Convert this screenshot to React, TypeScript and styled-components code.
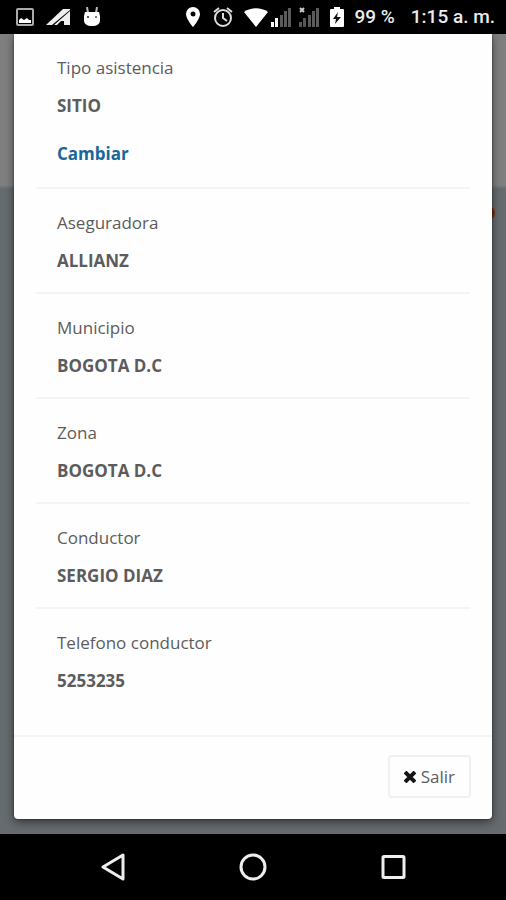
import React from "react";
import styled, { createGlobalStyle } from "styled-components";

const GlobalStyle = createGlobalStyle`
  *, *::before, *::after { box-sizing: border-box; }
  body { margin: 0; background: #000; font-family: "Open Sans", "Noto Sans", sans-serif; }
`;

const Screen = styled.div`
  display: flex;
  flex-direction: column;
  min-height: 100vh;
`;

const StatusBar = styled.header`
  display: flex;
  align-items: center;
  justify-content: space-between;
  height: 34px;
  padding: 0 11px 0 16px;
  background: #000;
  color: #ececec;
  font: 500 19px/34px Roboto, sans-serif;
`;

const StatusGroup = styled.div<{ $gap: number }>`
  display: flex;
  align-items: center;
  gap: ${(p) => p.$gap}px;
  white-space: nowrap;
  svg { display: block; flex: none; }
`;

const Stage = styled.main`
  position: relative;
  flex: 1;
  padding: 0 14px 15px;
  background: #656b6e;
`;

const DimmedHeader = styled.div`
  position: absolute;
  inset: 0 0 auto;
  height: 154px;
  background: #7f7f7f;
  border-bottom: 2px solid #717577;
`;

const DimmedBadge = styled.span`
  position: absolute;
  top: 172px;
  right: 11px;
  width: 14px;
  height: 14px;
  border-radius: 7px;
  background: #802808;
`;

const Dialog = styled.section`
  position: relative;
  background: #fefefe;
  border-radius: 0 0 4px 4px;
  box-shadow: 0 3px 10px rgba(0, 0, 0, 0.5), 0 0 2px rgba(0, 0, 0, 0.6);
`;

const Details = styled.dl`
  margin: 0;
  padding: 0 22px 23px;
`;

const Detail = styled.div`
  padding: 22px 21px 19px;
  border-bottom: 2px solid #f4f4f4;
  font-size: 17px;
  line-height: 24px;
  &:last-child { border-bottom: 0; }
`;

const Label = styled.dt`
  color: #5c5c5c;
`;

const Value = styled.dd`
  margin: 14px 0 0;
  color: #5c5c5c;
  font-weight: 700;
`;

const ChangeLink = styled.a`
  display: inline-block;
  color: #1b6699;
  text-decoration: none;
`;

const Action = styled.dd`
  margin: 24px 0 2px;
  font-weight: 700;
`;

const Footer = styled.footer`
  display: flex;
  justify-content: flex-end;
  padding: 18px 21px 21px;
  border-top: 2px solid #f4f4f4;
`;

const ExitButton = styled.button`
  display: flex;
  align-items: center;
  gap: 5px;
  height: 43px;
  padding: 0 14px;
  border: 2px solid #f0f0f0;
  border-radius: 4px;
  background: #fefefe;
  color: #5c5c5c;
  font: 17px/24px "Open Sans", "Noto Sans", sans-serif;
  svg { display: block; }
`;

const NavBar = styled.nav`
  display: flex;
  align-items: center;
  justify-content: center;
  gap: 100px;
  height: 66px;
  background: #000;
`;

const NavButton = styled.button`
  display: grid;
  place-items: center;
  width: 40px;
  height: 40px;
  padding: 0;
  border: 0;
  background: none;
`;

const details = [
  { label: "Tipo asistencia", value: "SITIO", editable: true },
  { label: "Aseguradora", value: "ALLIANZ" },
  { label: "Municipio", value: "BOGOTA D.C" },
  { label: "Zona", value: "BOGOTA D.C" },
  { label: "Conductor", value: "SERGIO DIAZ" },
  { label: "Telefono conductor", value: "5253235" },
];

const PictureIcon = () => (
  <svg width="18" height="18" viewBox="0 0 18 18">
    <rect x="1" y="1" width="16" height="16" rx="1" fill="none" stroke="#aaa" strokeWidth="2" />
    <path d="M3 15v-3l2-2 3 2 3-2 2 2h2v3z" fill="#fff" />
  </svg>
);

const ArrowIcon = () => (
  <svg width="25" height="18" viewBox="0 0 25 18">
    <path d="M0 17 17 1h7v1L6 17z" fill="#eee" />
    <path d="M24 3v14h-6v-4h-3l-4 4H8z" fill="#eee" />
  </svg>
);

const RobotIcon = () => (
  <svg width="18" height="20" viewBox="0 0 18 20">
    <path d="M5 6 4 0M13 6l1-6" stroke="#bbb" strokeWidth="2" />
    <path d="M2 5h14l1 4v4c0 4-3 6-8 6s-8-2-8-6V9z" fill="#fff" />
    <circle cx="5" cy="10" r="1" fill="#222" />
    <circle cx="13" cy="10" r="1" fill="#555" />
  </svg>
);

const PinIcon = () => (
  <svg width="16" height="20" viewBox="0 0 16 20">
    <path fillRule="evenodd" d="M8 0a7 7 0 0 0-7 7c0 5 7 13 7 13s7-8 7-13a7 7 0 0 0-7-7m0 4.5a2.5 2.5 0 1 1 0 5 2.5 2.5 0 0 1 0-5" fill="#fff" />
  </svg>
);

const AlarmIcon = () => (
  <svg width="20" height="20" viewBox="0 0 20 20" fill="none" stroke="#ddd" strokeWidth="2">
    <circle cx="10" cy="11" r="8" />
    <path d="M10 6v5l4 3M1 5l5-4M19 5l-5-4" />
  </svg>
);

const WifiIcon = () => (
  <svg width="26" height="20" viewBox="0 0 26 20">
    <path d="M1 5c7-5 17-5 24 0L13 20z" fill="#fff" />
  </svg>
);

const SignalIcon = ({ weak = false }: { weak?: boolean }) => (
  <svg width="21" height="20" viewBox="0 0 21 20">
    <path d="M0 15h3v5H0zM4 11h3v9H4z" fill={weak ? "#555" : "#fff"} />
    <path d="M9 8h3v12H9zM13 4h3v16h-3zM17 1h3v19h-3z" fill="#5b5b5b" />
    {weak && <path d="m1 1 4 4m0-4L1 5" stroke="#ccc" strokeWidth="2" />}
  </svg>
);

const BatteryIcon = () => (
  <svg width="14" height="20" viewBox="0 0 14 20">
    <path d="M4 0h6v2h3q1 0 1 1v16q0 1-1 1H1q-1 0-1-1V3q0-1 1-1h3z" fill="#fff" />
    <path d="M8 5 3 12h3l-1 5 6-7H7z" fill="#111" />
  </svg>
);

const CloseIcon = () => (
  <svg width="12" height="12" viewBox="0 0 12 12" stroke="#151515" strokeWidth="4">
    <path d="m1 1 10 10M11 1 1 11" />
  </svg>
);

export default function App() {
  return (
    <Screen>
      <GlobalStyle />
      <StatusBar>
        <StatusGroup $gap={12}>
          <PictureIcon />
          <ArrowIcon />
          <RobotIcon />
        </StatusGroup>
        <StatusGroup $gap={16}>
          <StatusGroup $gap={10}>
            <StatusGroup $gap={12}>
              <PinIcon />
              <AlarmIcon />
            </StatusGroup>
            <StatusGroup $gap={2}>
              <WifiIcon />
              <StatusGroup $gap={7}>
                <SignalIcon />
                <SignalIcon weak />
              </StatusGroup>
            </StatusGroup>
            <BatteryIcon />
            <span>99 %</span>
          </StatusGroup>
          <time dateTime="01:15">1:15 a. m.</time>
        </StatusGroup>
      </StatusBar>
      <Stage>
        <DimmedHeader />
        <DimmedBadge />
        <Dialog role="dialog" aria-label="Tipo asistencia">
          <Details>
            {details.map(({ label, value, editable }) => (
              <Detail key={label}>
                <Label>{label}</Label>
                <Value>{value}</Value>
                {editable && (
                  <Action>
                    <ChangeLink href="#cambiar">Cambiar</ChangeLink>
                  </Action>
                )}
              </Detail>
            ))}
          </Details>
          <Footer>
            <ExitButton type="button">
              <CloseIcon />
              Salir
            </ExitButton>
          </Footer>
        </Dialog>
      </Stage>
      <NavBar>
        <NavButton type="button" aria-label="Atrás">
          <svg width="28" height="28" viewBox="0 0 28 28" fill="none" stroke="#eee" strokeWidth="3" strokeLinejoin="round">
            <path d="M24 2v24L4 14z" />
          </svg>
        </NavButton>
        <NavButton type="button" aria-label="Inicio">
          <svg width="28" height="28" viewBox="0 0 28 28" fill="none" stroke="#eee" strokeWidth="3">
            <circle cx="14" cy="14" r="12" />
          </svg>
        </NavButton>
        <NavButton type="button" aria-label="Recientes">
          <svg width="28" height="28" viewBox="0 0 28 28" fill="none" stroke="#eee" strokeWidth="3">
            <rect x="4" y="3.5" width="21" height="21" rx="1" />
          </svg>
        </NavButton>
      </NavBar>
    </Screen>
  );
}
